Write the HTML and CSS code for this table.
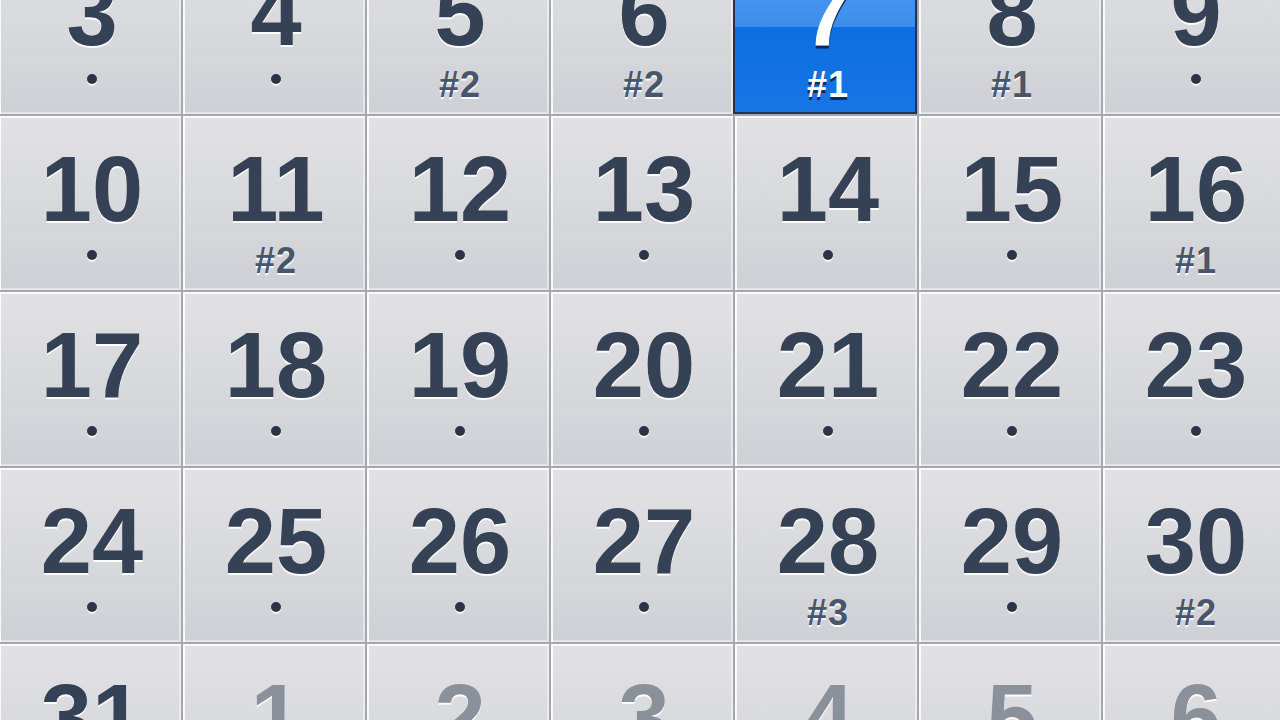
FILE: index.html
```html
<!DOCTYPE html>
<html lang="en">
<head>
<meta charset="utf-8">
<title>Calendar</title>
<link rel="stylesheet" href="styles.css">
</head>
<body>
<div class="calendar">
  <div class="day"><span class="num">3</span><span class="dot"></span></div>
  <div class="day"><span class="num">4</span><span class="dot"></span></div>
  <div class="day"><span class="num">5</span><span class="tag">#2</span></div>
  <div class="day"><span class="num">6</span><span class="tag">#2</span></div>
  <div class="day selected"><span class="num">7</span><span class="tag">#1</span></div>
  <div class="day"><span class="num">8</span><span class="tag">#1</span></div>
  <div class="day"><span class="num">9</span><span class="dot"></span></div>

  <div class="day"><span class="num">10</span><span class="dot"></span></div>
  <div class="day"><span class="num">11</span><span class="tag">#2</span></div>
  <div class="day"><span class="num">12</span><span class="dot"></span></div>
  <div class="day"><span class="num">13</span><span class="dot"></span></div>
  <div class="day"><span class="num">14</span><span class="dot"></span></div>
  <div class="day"><span class="num">15</span><span class="dot"></span></div>
  <div class="day"><span class="num">16</span><span class="tag">#1</span></div>

  <div class="day"><span class="num">17</span><span class="dot"></span></div>
  <div class="day"><span class="num">18</span><span class="dot"></span></div>
  <div class="day"><span class="num">19</span><span class="dot"></span></div>
  <div class="day"><span class="num">20</span><span class="dot"></span></div>
  <div class="day"><span class="num">21</span><span class="dot"></span></div>
  <div class="day"><span class="num">22</span><span class="dot"></span></div>
  <div class="day"><span class="num">23</span><span class="dot"></span></div>

  <div class="day"><span class="num">24</span><span class="dot"></span></div>
  <div class="day"><span class="num">25</span><span class="dot"></span></div>
  <div class="day"><span class="num">26</span><span class="dot"></span></div>
  <div class="day"><span class="num">27</span><span class="dot"></span></div>
  <div class="day"><span class="num">28</span><span class="tag">#3</span></div>
  <div class="day"><span class="num">29</span><span class="dot"></span></div>
  <div class="day"><span class="num">30</span><span class="tag">#2</span></div>

  <div class="day"><span class="num">31</span></div>
  <div class="day other"><span class="num">1</span></div>
  <div class="day other"><span class="num">2</span></div>
  <div class="day other"><span class="num">3</span></div>
  <div class="day other"><span class="num">4</span></div>
  <div class="day other"><span class="num">5</span></div>
  <div class="day other"><span class="num">6</span></div>
</div>
</body>
</html>
```
FILE: styles.css
```css
html, body {
  margin: 0;
  padding: 0;
  width: 1280px;
  height: 720px;
  overflow: hidden;
  background: #d3d4d8;
}

.calendar {
  display: grid;
  grid-template-columns: repeat(7, 184px);
  grid-auto-rows: 176px;
  width: 1288px;
  margin-left: -3px;
  margin-top: -62px;
  font-family: "Liberation Sans", Arial, sans-serif;
  font-weight: bold;
}

.day {
  box-sizing: border-box;
  border-left: 2px solid #a2a7b0;
  border-top: 2px solid #a2a7b0;
  background: linear-gradient(to bottom, #e2e2e5 0%, #cfd0d5 100%);
  box-shadow: inset 2px 2px 0 rgba(255, 255, 255, 0.85), inset -2px -2px 0 rgba(255, 255, 255, 0.45);
  display: flex;
  flex-direction: column;
  align-items: center;
  padding-top: 27px;
  padding-left: 4px;
  color: #354256;
}

.num {
  display: block;
  font-size: 92px;
  line-height: 92px;
  text-shadow: 0 2px 0 rgba(255, 255, 255, 0.9);
}

.dot {
  display: block;
  width: 10px;
  height: 10px;
  margin-top: 15px;
  border-radius: 50%;
  background: #2c3546;
  box-shadow: 0 2px 0 rgba(255, 255, 255, 0.8);
}

.tag {
  display: block;
  margin-top: 4px;
  font-size: 36px;
  line-height: 44px;
  letter-spacing: 1px;
  color: #48556b;
  text-shadow: 0 2px 0 rgba(255, 255, 255, 0.9);
}

.selected {
  border-left-color: #26324a;
  border-top-color: #26324a;
  background: linear-gradient(to bottom, #5da1f1 0%, #3b8dec 50%, #0c6ee1 50%, #1876e6 100%);
  box-shadow: inset -2px -2px 0 #26324a;
  color: #ffffff;
}

.selected .num,
.selected .tag {
  color: #ffffff;
  text-shadow: 0 3px 0 rgba(10, 30, 70, 0.85);
}

.other {
  color: #8b919b;
}
```
